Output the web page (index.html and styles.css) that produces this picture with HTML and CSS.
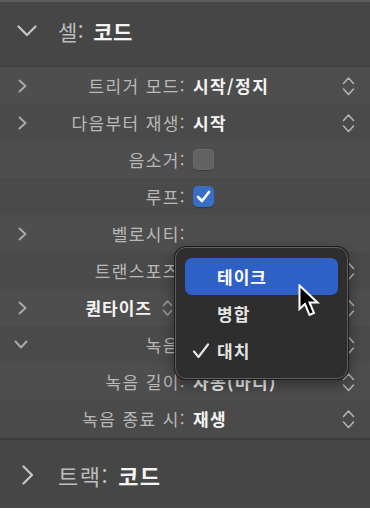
FILE: index.html
```html
<!DOCTYPE html>
<html lang="ko">
<head>
    <meta charset="UTF-8">
    <meta name="viewport" content="width=device-width, initial-scale=1.0">
    <title>셀 인스펙터</title>
    <link rel="stylesheet" href="styles.css">
</head>
<body>
    <div class="inspector">
        <div class="section-head">
            <svg class="disclosure-big" width="20" height="12" viewBox="0 0 20 12"><polyline points="1.5,1.5 10,10 18.5,1.5"/></svg>
            <span class="head-label">셀:</span><span class="head-value">코드</span>
        </div>

        <div class="rows">
            <div class="row light">
                <span class="arrow"><svg width="9" height="14" viewBox="0 0 9 14"><polyline points="1.5,1.5 7.5,7 1.5,12.5"/></svg></span>
                <span class="label">트리거 모드:</span>
                <span class="value">시작/정지</span>
                <svg class="updown" width="13" height="22" viewBox="0 0 13 22"><polyline points="1.5,8.5 6.5,3 11.5,8.5"/><polyline points="1.5,14 6.5,19.5 11.5,14"/></svg>
            </div>
            <div class="row">
                <span class="arrow"><svg width="9" height="14" viewBox="0 0 9 14"><polyline points="1.5,1.5 7.5,7 1.5,12.5"/></svg></span>
                <span class="label">다음부터 재생:</span>
                <span class="value">시작</span>
                <svg class="updown" width="13" height="22" viewBox="0 0 13 22"><polyline points="1.5,8.5 6.5,3 11.5,8.5"/><polyline points="1.5,14 6.5,19.5 11.5,14"/></svg>
            </div>
            <div class="row light">
                <span class="arrow"></span>
                <span class="label">음소거:</span>
                <span class="value"><span class="checkbox"></span></span>
            </div>
            <div class="row">
                <span class="arrow"></span>
                <span class="label">루프:</span>
                <span class="value"><span class="checkbox checked"><svg width="15" height="13" viewBox="0 0 15 13"><polyline points="2,7 6,11 13,2"/></svg></span></span>
            </div>
            <div class="row light">
                <span class="arrow"><svg width="9" height="14" viewBox="0 0 9 14"><polyline points="1.5,1.5 7.5,7 1.5,12.5"/></svg></span>
                <span class="label">벨로시티:</span>
                <span class="value"></span>
            </div>
            <div class="row">
                <span class="arrow"></span>
                <span class="label">트랜스포즈:</span>
                <span class="value"></span>
                <svg class="updown" width="13" height="22" viewBox="0 0 13 22"><polyline points="1.5,8.5 6.5,3 11.5,8.5"/><polyline points="1.5,14 6.5,19.5 11.5,14"/></svg>
            </div>
            <div class="row light">
                <span class="arrow"><svg width="9" height="14" viewBox="0 0 9 14"><polyline points="1.5,1.5 7.5,7 1.5,12.5"/></svg></span>
                <span class="label popup-label">퀀타이즈<svg class="updown small" width="11" height="20" viewBox="0 0 11 20"><polyline points="1.5,7.5 5.5,3 9.5,7.5"/><polyline points="1.5,12.5 5.5,17 9.5,12.5"/></svg></span>
                <span class="value"></span>
                <svg class="updown" width="13" height="22" viewBox="0 0 13 22"><polyline points="1.5,8.5 6.5,3 11.5,8.5"/><polyline points="1.5,14 6.5,19.5 11.5,14"/></svg>
            </div>
            <div class="row">
                <span class="arrow down"><svg width="14" height="9" viewBox="0 0 14 9"><polyline points="1.5,1.5 7,7.5 12.5,1.5"/></svg></span>
                <span class="label">녹음:</span>
                <span class="value"></span>
                <svg class="updown" width="13" height="22" viewBox="0 0 13 22"><polyline points="1.5,8.5 6.5,3 11.5,8.5"/><polyline points="1.5,14 6.5,19.5 11.5,14"/></svg>
            </div>
            <div class="row light">
                <span class="arrow"></span>
                <span class="label">녹음 길이:</span>
                <span class="value">자동(마디)</span>
                <svg class="updown" width="13" height="22" viewBox="0 0 13 22"><polyline points="1.5,8.5 6.5,3 11.5,8.5"/><polyline points="1.5,14 6.5,19.5 11.5,14"/></svg>
            </div>
            <div class="row">
                <span class="arrow"></span>
                <span class="label">녹음 종료 시:</span>
                <span class="value">재생</span>
                <svg class="updown" width="13" height="22" viewBox="0 0 13 22"><polyline points="1.5,8.5 6.5,3 11.5,8.5"/><polyline points="1.5,14 6.5,19.5 11.5,14"/></svg>
            </div>
        </div>

        <div class="section-head bottom">
            <svg class="disclosure-big" width="12" height="20" viewBox="0 0 12 20"><polyline points="1.5,1.5 10,10 1.5,18.5"/></svg>
            <span class="head-label">트랙:</span><span class="head-value">코드</span>
        </div>

        <!-- popup menu over the 녹음 row -->
        <div class="menu">
            <div class="menu-item selected">테이크</div>
            <div class="menu-item">병합</div>
            <div class="menu-item">
                <svg class="tick" width="18" height="16" viewBox="0 0 18 16"><polyline points="2,8.5 6.5,14 16,1.5"/></svg>
                대치
            </div>
        </div>

        <svg class="cursor" width="24" height="36" viewBox="0 0 24 36">
            <polygon points="1.5,1.5 1.5,25 7,20 11.5,31 16,29 11.5,18.5 19.5,18.5"/>
        </svg>
    </div>
</body>
</html>
```

FILE: styles.css
```css
* {
    margin: 0;
    padding: 0;
    box-sizing: border-box;
}
body {
    background: #ffffff;
    font-family: "Noto Sans CJK KR", "Noto Sans", sans-serif;
}
.inspector {
    position: relative;
    width: 370px;
    height: 508px;
    background: #474747;
    border-top: 2px solid #5c5c5c;
    overflow: hidden;
}
.section-head {
    height: 64px;
    display: flex;
    align-items: center;
    padding-left: 17px;
    padding-bottom: 7px;
    font-size: 21px;
    letter-spacing: 0.5px;
    background: #464646;
}
.section-head.bottom {
    height: 68px;
    padding-left: 22px;
    padding-top: 4px;
    padding-bottom: 0;
    font-size: 22px;
    letter-spacing: 1.5px;
    border-top: 2px solid #3c3c3c;
}
.disclosure-big {
    fill: none;
    stroke: #c6c6c6;
    stroke-width: 2.2;
    stroke-linecap: round;
    stroke-linejoin: round;
    margin-right: 21px;
}
.section-head.bottom .disclosure-big {
    margin-right: 24px;
}
.head-label {
    color: #bdbdbd;
    margin-right: 9px;
}
.section-head.bottom .head-label {
    margin-right: 9px;
}
.head-value {
    color: #f4f4f4;
    font-weight: bold;
}
.rows {
    border-top: 1px solid #3e3e3e;
    padding-bottom: 1px;
}
.row {
    height: 37px;
    display: grid;
    grid-template-columns: 40px 146px 1fr 13px;
    align-items: center;
    padding-right: 15px;
    font-size: 17px;
    letter-spacing: 1.4px;
    background: #4a4a4a;
}
.row.light {
    background: #4e4e4e;
}
.arrow {
    display: flex;
    align-items: center;
    padding-left: 18px;
}
.arrow.down {
    padding-left: 14px;
}
.arrow svg {
    fill: none;
    stroke: #a9a9a9;
    stroke-width: 2;
    stroke-linecap: round;
    stroke-linejoin: round;
}
.label {
    text-align: right;
    color: #b9b9b9;
    white-space: nowrap;
}
.popup-label {
    display: flex;
    justify-content: flex-end;
    align-items: center;
    color: #f4f4f4;
    font-weight: bold;
    letter-spacing: 1px;
    padding-right: 13px;
}
.value {
    padding-left: 7px;
    color: #f4f4f4;
    font-weight: bold;
    display: flex;
    align-items: center;
    white-space: nowrap;
}
.updown {
    fill: none;
    stroke: #b3b3b3;
    stroke-width: 1.6;
    stroke-linecap: round;
    stroke-linejoin: round;
}
.updown.small {
    margin-left: 10px;
    stroke: #9a9a9a;
}
.checkbox {
    width: 21px;
    height: 21px;
    border-radius: 5px;
    background: #626262;
    box-shadow: inset 0 0 0 1px #6a6a6a, 0 1px 1px rgba(0, 0, 0, 0.25);
    display: flex;
    align-items: center;
    justify-content: center;
}
.checkbox.checked {
    background: #3a6ec6;
    box-shadow: 0 1px 1px rgba(0, 0, 0, 0.25);
}
.checkbox svg {
    fill: none;
    stroke: #ffffff;
    stroke-width: 2.6;
    stroke-linecap: round;
    stroke-linejoin: round;
}
.menu {
    position: absolute;
    left: 175px;
    top: 245px;
    width: 173px;
    height: 132px;
    padding: 10px 9px;
    background: #2e2e2e;
    border: 1px solid #5f5f5f;
    border-radius: 11px;
    box-shadow: 0 0 0 1px #1c1c1c, 0 6px 16px rgba(0, 0, 0, 0.4);
}
.menu-item {
    height: 37px;
    display: flex;
    align-items: center;
    padding-left: 32px;
    position: relative;
    font-size: 17px;
    letter-spacing: 1px;
    font-weight: bold;
    color: #e4e4e4;
    border-radius: 7px;
}
.menu-item.selected {
    background: #2f60c8;
    color: #ffffff;
}
.tick {
    position: absolute;
    left: 7px;
    top: 11px;
    fill: none;
    stroke: #e4e4e4;
    stroke-width: 2.2;
    stroke-linecap: round;
    stroke-linejoin: round;
}
.cursor {
    position: absolute;
    left: 298px;
    top: 282px;
}
.cursor polygon {
    fill: #000000;
    stroke: #ffffff;
    stroke-width: 2;
    stroke-linejoin: miter;
}
```
